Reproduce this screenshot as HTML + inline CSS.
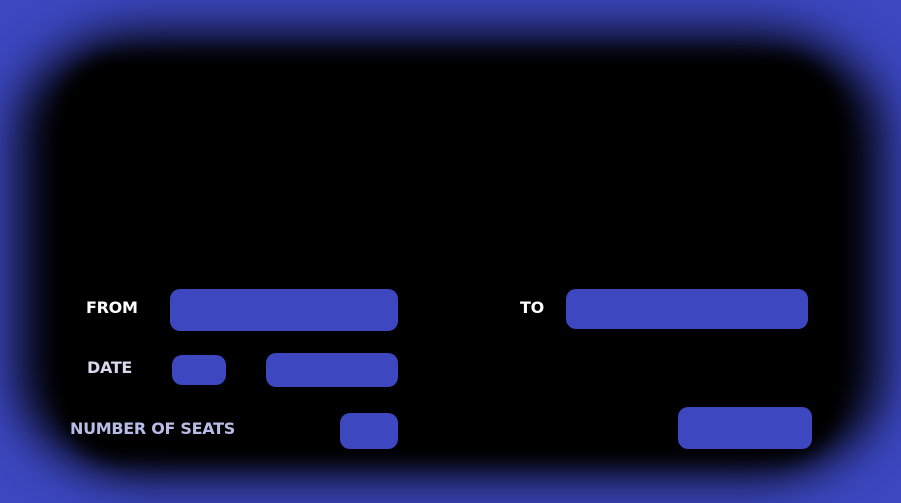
<!DOCTYPE html>
<html><head><style>
html,body{margin:0;padding:0;width:901px;height:503px;overflow:hidden;background:#3c47c0;}
.blk{position:absolute;left:18px;top:32px;width:864px;height:445px;background:#000;border-radius:130px/100px;filter:blur(24px);}
.blk2{position:absolute;left:60px;top:55px;width:780px;height:405px;background:#000;border-radius:60px;filter:blur(10px);}
.b{position:absolute;background:#3c47c0;border-radius:10px;}
.t{position:absolute;font-family:"DejaVu Sans",sans-serif;font-weight:bold;font-size:16px;line-height:20px;letter-spacing:-0.3px;}
</style></head><body>
<div class="blk"></div><div class="blk2"></div>
<div class="b" style="left:170px;top:289px;width:228px;height:42px"></div>
<div class="b" style="left:566px;top:289px;width:242px;height:40px"></div>
<div class="b" style="left:172px;top:355px;width:54px;height:30px"></div>
<div class="b" style="left:266px;top:353px;width:132px;height:34px"></div>
<div class="b" style="left:340px;top:413px;width:58px;height:36px"></div>
<div class="b" style="left:678px;top:407px;width:134px;height:42px"></div>
<div class="t" style="left:86px;top:298px;color:#fff">FROM</div>
<div class="t" style="left:520px;top:298px;color:#fff">TO</div>
<div class="t" style="left:87px;top:358px;color:#d8d8ee">DATE</div>
<div class="t" style="left:70px;top:419px;color:#b8bce6">NUMBER OF SEATS</div>
</body></html>
